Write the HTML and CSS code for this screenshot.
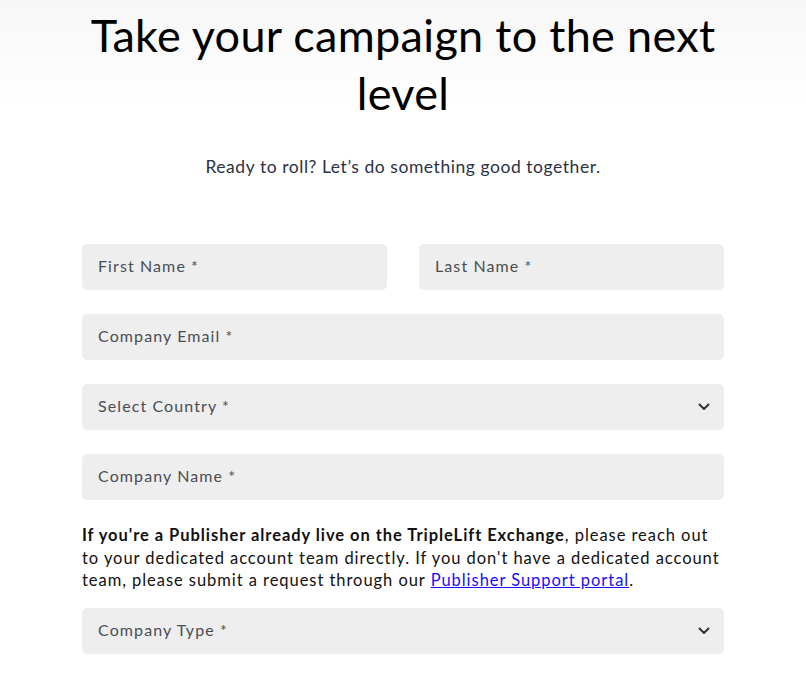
FILE: index.html
```html
<!DOCTYPE html>
<html lang="en">
<head>
<meta charset="utf-8">
<title>Contact</title>
<link rel="stylesheet" href="styles.css">
</head>
<body>
<main class="page">
  <header class="hero">
    <h1 class="title">Take your campaign to the next level</h1>
    <p class="subtitle">Ready to roll? Let’s do something good together.</p>
  </header>
  <form class="form">
    <div class="row two">
      <div class="field"><span class="ph">First Name *</span></div>
      <div class="field"><span class="ph">Last Name *</span></div>
    </div>
    <div class="row">
      <div class="field"><span class="ph">Company Email *</span></div>
    </div>
    <div class="row">
      <div class="field select"><span class="ph">Select Country *</span>
        <svg class="chev" width="12" height="8" viewBox="0 0 12 8"><path d="M1.5 1.5 L6 6 L10.5 1.5" fill="none" stroke="#2f3440" stroke-width="2" stroke-linecap="round" stroke-linejoin="round"/></svg>
      </div>
    </div>
    <div class="row">
      <div class="field"><span class="ph">Company Name *</span></div>
    </div>
    <p class="note"><strong>If you're a Publisher already live on the TripleLift Exchange</strong>, please reach out to your dedicated account team directly. If you don't have a dedicated account team, please submit a request through our <a href="#">Publisher Support portal</a>.</p>
    <div class="row">
      <div class="field select"><span class="ph">Company Type *</span>
        <svg class="chev" width="12" height="8" viewBox="0 0 12 8"><path d="M1.5 1.5 L6 6 L10.5 1.5" fill="none" stroke="#2f3440" stroke-width="2" stroke-linecap="round" stroke-linejoin="round"/></svg>
      </div>
    </div>
  </form>
</main>
</body>
</html>
```
FILE: styles.css
```css
html, body {
  margin: 0;
  padding: 0;
}
body {
  background: linear-gradient(to bottom, #f7f7f7 0px, #ffffff 110px) no-repeat, #ffffff;
  font-family: "Lato", "Noto Sans", sans-serif;
  color: #000;
}
.page {
  width: 642px;
  margin: 0 auto;
}
.hero {
  text-align: center;
}
.title {
  margin: 0 -10px;
  padding-top: 6px;
  font-size: 45px;
  line-height: 58px;
  font-weight: 400;
  letter-spacing: 0.3px;
  color: #000;
}
.subtitle {
  margin: 33px 0 0;
  font-size: 17.5px;
  line-height: 24px;
  letter-spacing: 0.55px;
  color: #2b3245;
}
.form {
  margin-top: 65px;
  display: flex;
  flex-direction: column;
}
.row {
  display: flex;
  margin-bottom: 24px;
}
.row.two {
  gap: 32px;
}
.field {
  flex: 1;
  height: 46px;
  background: #eeeeee;
  border-radius: 5px;
  display: flex;
  align-items: center;
  padding: 0 16px 2px;
  box-sizing: border-box;
  justify-content: space-between;
}
.ph {
  font-size: 16px;
  line-height: 20px;
  letter-spacing: 1.1px;
  color: #4a4d55;
}
.chev {
  margin-right: -2px;
  margin-top: 2px;
}
.note {
  margin: 0 0 16px;
  font-size: 16.5px;
  line-height: 22.5px;
  letter-spacing: 0.95px;
  color: #111;
}
.note strong {
  font-weight: 700;
  letter-spacing: 0.95px;
}
.note a {
  color: #1a0dff;
  text-decoration: underline;
}
```
